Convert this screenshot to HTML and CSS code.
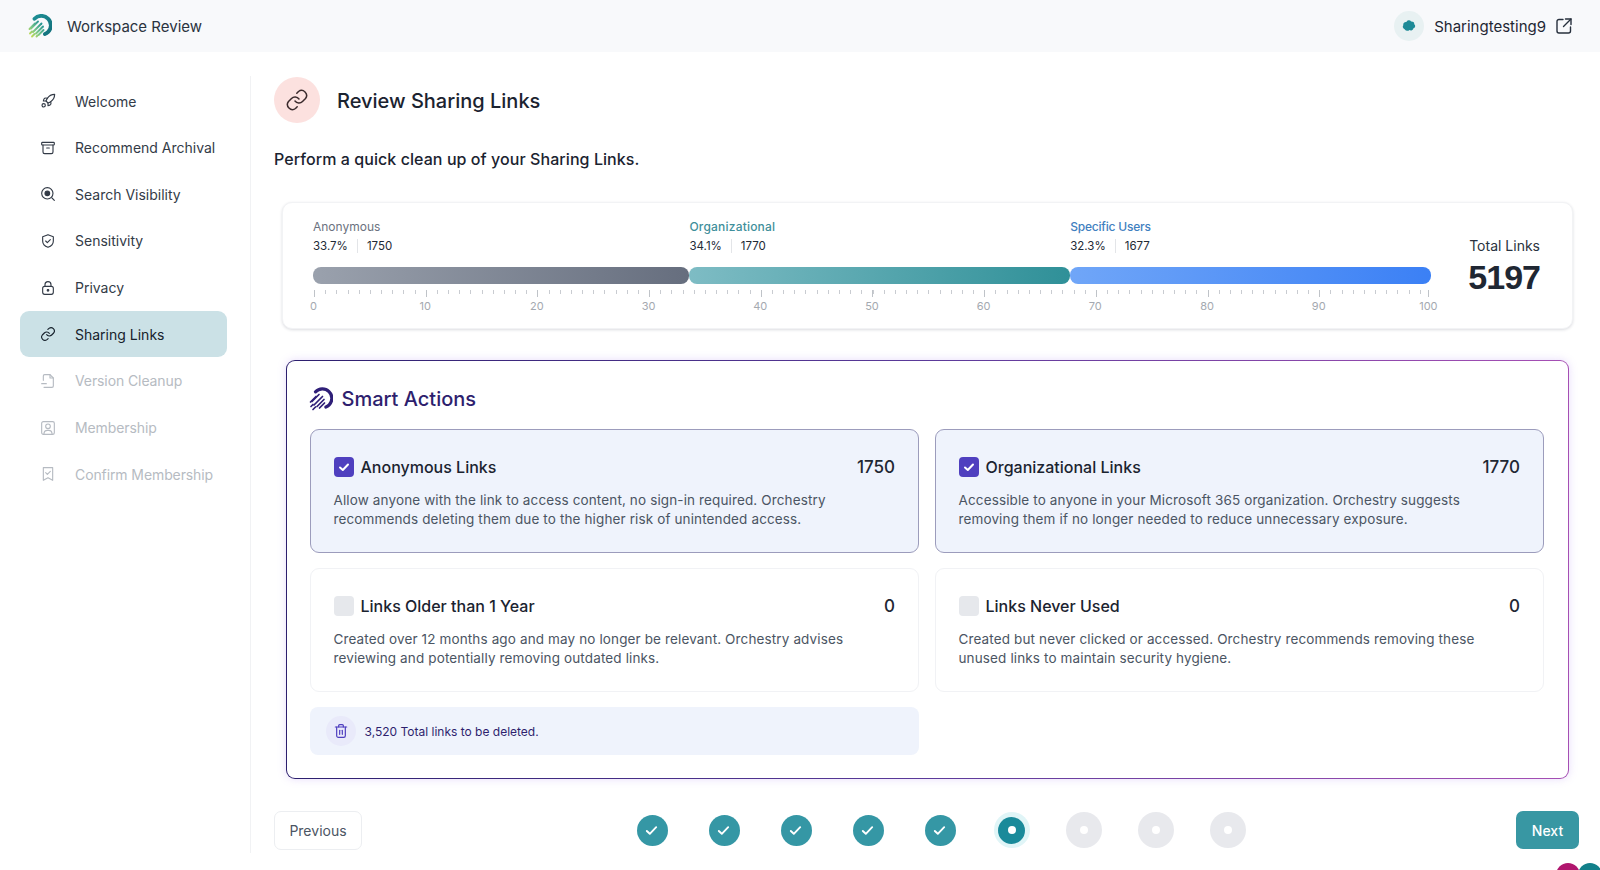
FILE: index.html
```html
<!DOCTYPE html>
<html lang="en">
<head>
<meta charset="utf-8">
<title>Workspace Review</title>
<link rel="stylesheet" href="styles.css">
</head>
<body>
<svg class="defs" width="0" height="0" aria-hidden="true">
  <defs>
    <linearGradient id="arc" x1="0" y1="0" x2="1" y2="1"><stop offset="0" stop-color="#1f8f94"/><stop offset="1" stop-color="#12707c"/></linearGradient>
    <linearGradient id="streak" gradientUnits="userSpaceOnUse" x1="1" y1="23" x2="14" y2="9"><stop offset="0" stop-color="#d5e04a"/><stop offset=".5" stop-color="#74c48a"/><stop offset="1" stop-color="#1f8f94"/></linearGradient>
  </defs>
</svg>
<div class="app">
  <header class="topbar">
    <div class="brand">
      <svg class="logo" viewBox="0 0 24 24" fill="none" stroke-linecap="round">
        <path d="M6.5 4.8A9.4 9.4 0 0 1 20 4.6a9.4 9.4 0 0 1 .2 13.3c-1 1-2 1.7-3.3 2.2" stroke="url(#arc)" stroke-width="3.8"/>
        <g stroke="url(#streak)" stroke-width="1.9">
          <path d="M13.5 9.5 5 18"/><path d="M15 12.5 8 19.5"/><path d="M15.5 16 10.5 21"/><path d="M10 7.5 3 14.5"/><path d="M7 9.5 1.5 15"/><path d="M4 17.5 2 19.5"/><path d="M6.5 20 4 22.5"/><path d="M9.5 21.5 8.5 22.5"/>
        </g>
      </svg>
      <span class="brand-name">Workspace Review</span>
    </div>
    <div class="account">
      <span class="avatar">
        <svg viewBox="0 0 16 16" width="14" height="14"><path d="M5 3.5a3 3 0 0 1 5.4-.7A3 3 0 0 1 14 6a2.6 2.6 0 0 1-.9 4.6 3 3 0 0 1-4.600 1.900A3.400 3.400 0 0 1 3 11.600 3 3 0 0 1 1.500 7 3 3 0 0 1 5 3.500z" fill="#1e8a97"/></svg>
      </span>
      <span class="account-name">Sharingtesting9</span>
      <svg class="ext" viewBox="0 0 16 16" fill="none" stroke="#27303d" stroke-width="1.4" stroke-linecap="round" stroke-linejoin="round"><path d="M7 1.500H3a2 2 0 0 0-2 2v9.500a2 2 0 0 0 2 2h9.500a2 2 0 0 0 2-2V9"/><path d="M9.500 1h5.500v5.500"/><path d="M15 1 7.500 8.500"/></svg>
    </div>
  </header>

  <div class="body">
    <nav class="sidebar">
      <a class="nav-item">
        <svg class="ico" viewBox="0 0 24 24"><path d="m12 15-3-3a22 22 0 0 1 2-4A12.900 12.900 0 0 1 22 2c0 2.700-.8 7.500-6 11a22.400 22.400 0 0 1-4 2z"/><path d="M9 12H5s.5-3 2-4c1.600-1 4 0 4 0"/><path d="M12 15v4s3-.5 4-2c1-1.600 0-4 0-4"/><circle cx="5.500" cy="18.500" r="2.500"/></svg>
        <span>Welcome</span>
      </a>
      <a class="nav-item">
        <svg class="ico" viewBox="0 0 24 24"><rect x="2.500" y="3.500" width="19" height="4" rx="1.200"/><path d="M4.500 7.500V18a2.500 2.500 0 0 0 2.500 2.500h10a2.500 2.500 0 0 0 2.500-2.500V7.500"/><path d="M10 12h4"/></svg>
        <span>Recommend Archival</span>
      </a>
      <a class="nav-item">
        <svg class="ico" viewBox="0 0 24 24"><circle cx="11" cy="11" r="8.500"/><circle cx="11" cy="11" r="3.500" fill="currentColor"/><path d="m18 18 3.500 3.500"/></svg>
        <span>Search Visibility</span>
      </a>
      <a class="nav-item">
        <svg class="ico" viewBox="0 0 24 24"><path d="M12 2.500 4 5.500v6.500c0 5 3.500 8 8 9.500 4.500-1.500 8-4.500 8-9.500V5.500z"/><path d="m8.500 12 2.500 2.500 4.500-4.500"/></svg>
        <span>Sensitivity</span>
      </a>
      <a class="nav-item">
        <svg class="ico" viewBox="0 0 24 24"><rect x="4" y="9.500" width="16" height="12" rx="3"/><path d="M7.500 9.500V7a4.500 4.500 0 0 1 9 0v2.500"/><circle cx="12" cy="15.500" r="1.200" fill="currentColor"/></svg>
        <span>Privacy</span>
      </a>
      <a class="nav-item active">
        <svg class="ico" viewBox="0 0 24 24"><path d="M10 13a5 5 0 0 0 7.500.5l3-3a5 5 0 0 0-7-7l-1.700 1.700"/><path d="M14 11a5 5 0 0 0-7.500-.5l-3 3a5 5 0 0 0 7 7l1.700-1.700"/></svg>
        <span>Sharing Links</span>
      </a>
      <a class="nav-item off">
        <svg class="ico" viewBox="0 0 24 24"><path d="M5 11V4.500A2 2 0 0 1 7 2.500h8l5 5v12a2 2 0 0 1-2 2H6"/><path d="M15 2.500v5h5"/><path d="M2.500 16h7"/></svg>
        <span>Version Cleanup</span>
      </a>
      <a class="nav-item off">
        <svg class="ico" viewBox="0 0 24 24"><rect x="2.500" y="2.500" width="19" height="19" rx="2.500"/><circle cx="12" cy="9.500" r="3.500"/><path d="M6 21.500v-2a5 5 0 0 1 5-4h2a5 5 0 0 1 5 4v2"/></svg>
        <span>Membership</span>
      </a>
      <a class="nav-item off">
        <svg class="ico" viewBox="0 0 24 24"><path d="M5 2.500h14v19l-7-4-7 4z"/><path d="m8.500 10 2.500 2.500 4.500-4.500"/></svg>
        <span class="tight">Confirm Membership</span>
      </a>
    </nav>

    <main class="content">
      <div class="page-head">
        <span class="page-icon">
          <svg viewBox="0 0 24 24" fill="none" stroke="#3a2a2c" stroke-width="1.500" stroke-linecap="round" stroke-linejoin="round"><path d="M10 13a5 5 0 0 0 7.500.5l3-3a5 5 0 0 0-7-7l-1.700 1.700"/><path d="M14 11a5 5 0 0 0-7.500-.5l-3 3a5 5 0 0 0 7 7l1.700-1.700"/></svg>
        </span>
        <h1>Review Sharing Links</h1>
      </div>
      <p class="lead">Perform a quick clean up of your Sharing Links.</p>

      <section class="stats">
        <div class="chart">
          <div class="segments">
            <div class="seg seg-anon" style="width:33.67%">
              <div class="seg-label">Anonymous</div>
              <div class="seg-vals"><span>33.7%</span><i></i><span>1750</span></div>
              <div class="seg-bar"></div>
            </div>
            <div class="seg seg-org" style="width:34.06%">
              <div class="seg-label">Organizational</div>
              <div class="seg-vals"><span>34.1%</span><i></i><span>1770</span></div>
              <div class="seg-bar"></div>
            </div>
            <div class="seg seg-spec" style="width:32.27%">
              <div class="seg-label">Specific Users</div>
              <div class="seg-vals"><span>32.3%</span><i></i><span>1677</span></div>
              <div class="seg-bar"></div>
            </div>
          </div>
          <div class="ruler"></div>
          <div class="scale">
            <span>0</span><span>10</span><span>20</span><span>30</span><span>40</span><span>50</span><span>60</span><span>70</span><span>80</span><span>90</span><span>100</span>
          </div>
        </div>
        <div class="total">
          <div class="total-label">Total Links</div>
          <div class="total-num">5197</div>
        </div>
      </section>

      <section class="panel">
        <div class="panel-head">
          <svg class="panel-logo" viewBox="0 0 24 24" fill="none" stroke="#2f1f78" stroke-linecap="round">
            <path d="M6.500 4.800A9.400 9.400 0 0 1 20 4.600a9.400 9.400 0 0 1 .2 13.300c-1 1-2 1.700-3.300 2.200" stroke-width="3.200"/>
            <g stroke-width="1.700"><path d="M13.500 9.500 5 18"/><path d="M15 12.500 8 19.500"/><path d="M15.500 16 10.500 21"/><path d="M10 7.500 3 14.500"/><path d="M7 9.500 1.500 15"/><path d="M4 17.500 2 19.500"/><path d="M6.500 20 4 22.500"/></g>
          </svg>
          <h2>Smart Actions</h2>
        </div>
        <div class="cards">
          <article class="card on">
            <div class="card-head">
              <span class="box"><svg viewBox="0 0 20 20" fill="none" stroke="#fff" stroke-width="2" stroke-linecap="round" stroke-linejoin="round"><path d="m6 10.500 2.800 2.500L14 7.500"/></svg></span>
              <span class="card-title">Anonymous Links</span>
              <span class="card-count">1750</span>
            </div>
            <p>Allow anyone with the link to access content, no sign-in required. Orchestry recommends deleting them due to the higher risk of unintended access.</p>
          </article>
          <article class="card on">
            <div class="card-head">
              <span class="box"><svg viewBox="0 0 20 20" fill="none" stroke="#fff" stroke-width="2" stroke-linecap="round" stroke-linejoin="round"><path d="m6 10.500 2.800 2.500L14 7.500"/></svg></span>
              <span class="card-title">Organizational Links</span>
              <span class="card-count">1770</span>
            </div>
            <p>Accessible to anyone in your Microsoft 365 organization. Orchestry suggests removing them if no longer needed to reduce unnecessary exposure.</p>
          </article>
          <article class="card">
            <div class="card-head">
              <span class="box"></span>
              <span class="card-title">Links Older than 1 Year</span>
              <span class="card-count">0</span>
            </div>
            <p>Created over 12 months ago and may no longer be relevant. Orchestry advises reviewing and potentially removing outdated links.</p>
          </article>
          <article class="card">
            <div class="card-head">
              <span class="box"></span>
              <span class="card-title">Links Never Used</span>
              <span class="card-count">0</span>
            </div>
            <p>Created but never clicked or accessed. Orchestry recommends removing these unused links to maintain security hygiene.</p>
          </article>
          <div class="banner">
            <span class="trash">
              <svg viewBox="0 0 24 24" fill="none" stroke="#4f3fbf" stroke-width="1.800" stroke-linecap="round" stroke-linejoin="round"><path d="M3.500 6h17"/><path d="M8.500 6V4a1.500 1.500 0 0 1 1.500-1.500h4A1.500 1.500 0 0 1 15.500 4v2"/><path d="M5.500 6v13a2.500 2.500 0 0 0 2.500 2.500h8a2.500 2.500 0 0 0 2.500-2.500V6"/><path d="M10 11v6"/><path d="M14 11v6"/></svg>
            </span>
            <span>3,520 Total links to be deleted.</span>
          </div>
        </div>
      </section>

      <footer class="pager">
        <button class="btn-prev">Previous</button>
        <div class="steps">
          <span class="step done"><svg viewBox="0 0 16 16" fill="none" stroke="#fff" stroke-width="2" stroke-linecap="round" stroke-linejoin="round"><path d="m3 8.500 3.200 3L13 4.500"/></svg></span>
          <span class="step done"><svg viewBox="0 0 16 16" fill="none" stroke="#fff" stroke-width="2" stroke-linecap="round" stroke-linejoin="round"><path d="m3 8.500 3.200 3L13 4.500"/></svg></span>
          <span class="step done"><svg viewBox="0 0 16 16" fill="none" stroke="#fff" stroke-width="2" stroke-linecap="round" stroke-linejoin="round"><path d="m3 8.500 3.200 3L13 4.500"/></svg></span>
          <span class="step done"><svg viewBox="0 0 16 16" fill="none" stroke="#fff" stroke-width="2" stroke-linecap="round" stroke-linejoin="round"><path d="m3 8.500 3.200 3L13 4.500"/></svg></span>
          <span class="step done"><svg viewBox="0 0 16 16" fill="none" stroke="#fff" stroke-width="2" stroke-linecap="round" stroke-linejoin="round"><path d="m3 8.500 3.200 3L13 4.500"/></svg></span>
          <span class="step current"><b></b></span>
          <span class="step todo"><b></b></span>
          <span class="step todo"><b></b></span>
          <span class="step todo"><b></b></span>
        </div>
        <button class="btn-next">Next</button>
      </footer>
    </main>
  </div>
  <div class="bubbles"><span class="bubble-a"></span><span class="bubble-b"></span></div>
</div>
</body>
</html>
```
FILE: styles.css
```css
* { box-sizing: border-box; }
html, body { margin: 0; height: 100%; }
body { font-family: "Inter", "Noto Sans", "Liberation Sans", sans-serif; color: #1f2937; background: #fff; overflow: hidden; }
.defs { position: absolute; }
.app { position: relative; width: 1600px; height: 870px; overflow: hidden; }

.topbar { height: 52px; background: #f8f9fb; display: flex; align-items: center; justify-content: space-between; padding: 0 28px; }
.brand { display: flex; align-items: center; gap: 15px; }
.logo { width: 24px; height: 24px; display: block; }
.brand-name { font-size: 15px; color: #2a3340; }
.account { display: flex; align-items: center; }
.avatar { width: 30px; height: 30px; border-radius: 50%; background: #e8f1f2; display: flex; align-items: center; justify-content: center; margin-right: 10px; }
.account-name { font-size: 15px; color: #1f2733; margin-right: 10px; }
.ext { width: 16px; height: 16px; }

.body { display: flex; height: 818px; }
.sidebar { width: 251px; flex: none; margin-top: 24px; margin-bottom: 17px; padding: 2px 23px 0 20px; border-right: 1px solid #f1f2f4; display: grid; grid-auto-rows: 46.67px; align-content: start; }
.nav-item { display: flex; align-items: center; gap: 19px; height: 46px; padding-left: 20px; border-radius: 9px; font-size: 14px; color: #333b47; }
.nav-item .ico { width: 16px; height: 16px; flex: none; fill: none; stroke: currentColor; stroke-width: 1.700; stroke-linecap: round; stroke-linejoin: round; }
.nav-item.active { background: #cbe1e6; color: #17212c; }
.nav-item.off { color: #b6bbc2; letter-spacing: -.1px; }

.content { flex: 1; min-width: 0; padding: 25px 21px 0 23px; display: flex; flex-direction: column; }
.page-head { display: flex; align-items: center; gap: 17px; }
.page-icon { width: 46px; height: 46px; border-radius: 50%; background: #fce1df; display: flex; align-items: center; justify-content: center; }
.page-icon svg { width: 24px; height: 24px; }
h1 { margin: 1px 0 0; font-size: 20px; font-weight: 500; color: #1b2330; }
.lead { margin: 25px 0 0; font-size: 16px; line-height: 22px; font-weight: 500; color: #1b2330; letter-spacing: .07px; }

.stats { margin: 32px 6px 0 8px; height: 127px; border-radius: 10px; background: #fff; border: 1px solid #f2f3f5; box-shadow: 0 1px 3px rgba(30, 40, 60, .16); padding: 15px 32px 0 30px; display: flex; justify-content: space-between; }
.chart { width: 1118px; flex: none; }
.segments { display: flex; }
.seg-label { font-size: 12px; line-height: 18px; font-weight: 500; }
.seg-anon .seg-label { color: #6b7280; font-weight: 400; }
.seg-org .seg-label { color: #3f8f9b; letter-spacing: .2px; }
.seg-spec .seg-label { color: #3f80c0; letter-spacing: -.2px; }
.seg-vals { display: flex; align-items: center; font-size: 11.500px; line-height: 20px; color: #222a36; }
.seg-vals i { width: 1px; height: 14px; background: #e3e5e8; margin: 0 9px; }
.seg-bar { height: 17px; border-radius: 8px; margin-top: 11px; }
.seg-anon .seg-bar { background: linear-gradient(90deg, #9aa1ad, #666e7e); }
.seg-org .seg-bar { background: linear-gradient(90deg, #7ebcc4, #2f9098); }
.seg-spec .seg-bar { background: linear-gradient(90deg, #70a6f8, #3b80f5); }
.ruler { width: 1115px; margin: 6px 0 0 .5px; height: 7px; border-right: 1px solid #bfc3c8; background-image: repeating-linear-gradient(90deg, #bfc3c8 0 1px, transparent 1px 111.700px), repeating-linear-gradient(90deg, #c9ccd1 0 1px, transparent 1px 11.170px); background-size: 100% 7px, 100% 4px; background-repeat: no-repeat; }
.scale { width: 1117px; margin: 1px 0 0 .5px; display: flex; justify-content: space-between; font-size: 11px; line-height: 16px; color: #a4a9b0; }
.scale span { width: 0; display: flex; justify-content: center; }
.scale span:last-child { transform: translateX(-2px); }
.total { width: 70px; flex: none; padding-top: 18px; display: flex; flex-direction: column; align-items: flex-end; white-space: nowrap; }
.total-label { font-size: 14px; line-height: 20px; color: #2a3340; }
.total-num { font-family: "Liberation Sans", sans-serif; font-size: 34px; line-height: 40px; font-weight: 700; letter-spacing: -1px; color: #1f2733; margin-top: 1px; }

.panel { margin: 31px 10px 0 12px; height: 419px; border: 1.500px solid transparent; border-radius: 9px; background: linear-gradient(#fff, #fff) padding-box, linear-gradient(90deg, #2c1f6e, #5b3a9a 50%, #a64fb4) border-box; box-shadow: 0 0 8px rgba(170, 130, 240, .28); padding: 0 22.500px; }
.panel-head { display: flex; align-items: center; gap: 9px; height: 68px; padding-top: 8px; }
.panel-logo { width: 24px; height: 24px; margin-left: -1px; }
h2 { margin: 0; font-size: 20px; font-weight: 500; color: #2e1f6e; }
.cards { display: grid; grid-template-columns: 609.500px 609.500px; column-gap: 15.500px; row-gap: 15px; grid-auto-rows: min-content; }
.card { height: 124px; border: 1px solid #f1f2f5; border-radius: 9px; background: #fff; padding: 26.500px 23px 0; }
.card.on { background: #eff3fc; border-color: #9c9cbc; }
.card-head { display: flex; align-items: center; height: 20px; }
.box { width: 20px; height: 20px; border-radius: 4px; background: #e6e8ec; flex: none; margin-right: 7px; }
.card.on .box { background: #4f3fbf; }
.box svg { display: block; width: 20px; height: 20px; }
.card-title { font-size: 16px; font-weight: 500; color: #1b2330; flex: 1; }
.card-count { font-size: 17px; font-weight: 500; color: #1f2733; }
.card p { margin: 14.500px 0 0; font-size: 13.500px; line-height: 19.300px; letter-spacing: .13px; color: #4b5563; }
.banner { height: 48px; border-radius: 8px; background: #eff3fc; padding-left: 16px; display: flex; align-items: center; gap: 9px; font-size: 12px; color: #2e1f6e; }
.trash { width: 30px; height: 30px; border-radius: 50%; background: #e9eafa; display: flex; align-items: center; justify-content: center; }
.trash svg { width: 16px; height: 16px; }

.pager { margin-top: 32px; display: flex; align-items: center; justify-content: space-between; height: 38px; }
.btn-prev, .btn-next { font: inherit; font-size: 14px; cursor: pointer; border-radius: 7px; }
.btn-prev { width: 88px; height: 39px; background: #fff; border: 1px solid #eceef1; color: #4b5563; }
.btn-next { width: 63px; height: 38px; background: #3897a3; border: 0; color: #fff; font-weight: 500; }
.steps { display: flex; align-items: center; width: 612px; justify-content: space-between; margin-left: 1px; }
.step { width: 36px; height: 36px; display: flex; align-items: center; justify-content: center; border-radius: 50%; }
.step.done { background: #3597a5; background-clip: content-box; padding: 2.500px; }
.step.done svg { width: 15px; height: 15px; }
.step.current { background: #e0f5f7; padding: 4.500px; }
.step.current b { width: 100%; height: 100%; border-radius: 50%; background: #1a8a9a; display: flex; align-items: center; justify-content: center; }
.step.current b::after { content: ""; width: 8px; height: 8px; border-radius: 50%; background: #fff; }
.step.todo { background: #e8e9ed; }
.step.todo b { width: 8px; height: 8px; border-radius: 50%; background: #fff; }

.bubbles { position: absolute; right: 0; top: 863px; display: flex; }
.bubble-a, .bubble-b { width: 24px; height: 24px; border-radius: 50%; display: block; }
.bubble-a { background: #b0166e; }
.bubble-b { background: #12808a; margin-left: -2px; margin-right: -2px; }
```
